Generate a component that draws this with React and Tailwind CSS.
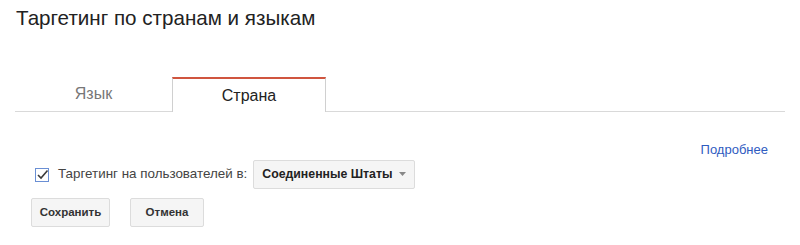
import React from "react";

export default function App() {
  return (
    <div className="w-[800px] h-[245px] bg-white text-[#222] overflow-hidden" style={{ fontFamily: '"Liberation Sans", Arial, sans-serif' }}>
      <div className="pl-[16px] pt-[6px] text-[20.6px] leading-[24px] text-[#222] whitespace-nowrap">Таргетинг по странам и языкам</div>

      <div className="mx-[15px] mt-[47px] flex h-[35px] border-b border-[#d9d9d9]">
        <div className="w-[157px] h-[34px] flex items-center justify-center text-[16px] text-[#777]">Язык</div>
        <div className="w-[154px] h-[35px] -mb-px bg-white border-t-2 border-t-[#d0553f] border-x border-x-[#d0d0d0] flex items-center justify-center text-[16px] text-[#222]">Страна</div>
      </div>

      <div className="mt-[30px] flex justify-end pr-[32px]">
        <a className="text-[13px] leading-[16px] text-[#2f5bbf] cursor-pointer">Подробнее</a>
      </div>

      <div className="mt-[2px] flex items-center h-[28px] pl-[35px]">
        <svg width="15" height="15" viewBox="0 0 15 15" className="shrink-0">
          <rect x="0.5" y="1.5" width="13" height="13" fill="white" stroke="#6a8fd4" />
          <path d="M3 8 L6 11 L12.5 3.5" fill="none" stroke="#3a3a3a" strokeWidth="1.6" />
        </svg>
        <span className="ml-[8px] text-[13.4px] text-[#444] whitespace-nowrap">Таргетинг на пользователей в:</span>
        <div className="ml-[6px] w-[162px] h-[29px] bg-[#f5f5f5] border border-[#dcdcdc] rounded-[2px] flex items-center pl-[8px] pr-[8px] shrink-0">
          <span className="text-[12.3px] font-bold text-[#222] flex-1 whitespace-nowrap">Соединенные Штаты</span>
          <svg width="7" height="4" viewBox="0 0 7 4"><path d="M0 0 H7 L3.5 4 Z" fill="#888" /></svg>
        </div>
      </div>

      <div className="mt-[10px] flex pl-[31px] gap-[20px]">
        <button className="w-[79px] h-[29px] bg-[#f5f5f5] border border-[#dcdcdc] rounded-[2px] text-[11.5px] font-bold text-[#333] whitespace-nowrap">Сохранить</button>
        <button className="w-[74px] h-[29px] bg-[#f5f5f5] border border-[#dcdcdc] rounded-[2px] text-[11.5px] font-bold text-[#333] whitespace-nowrap">Отмена</button>
      </div>
    </div>
  );
}
